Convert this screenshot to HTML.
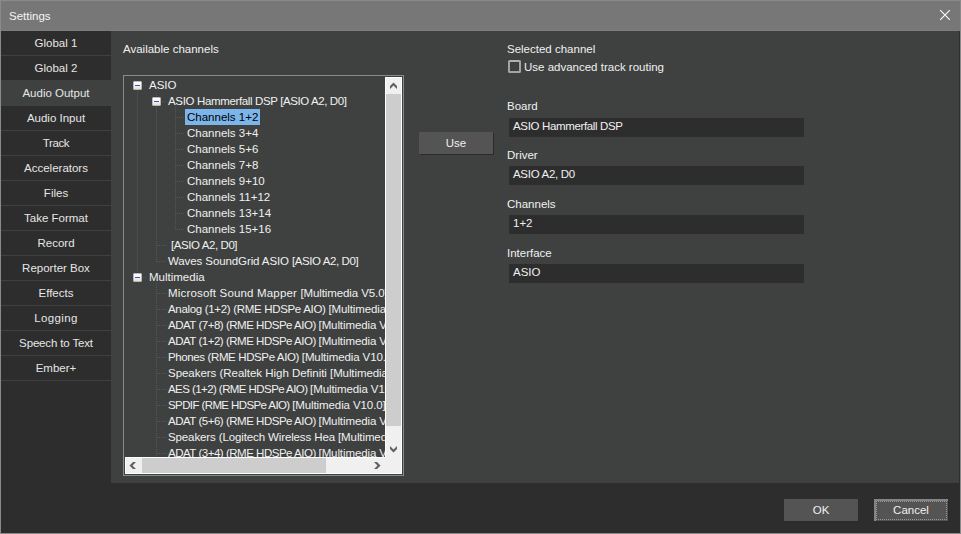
<!DOCTYPE html>
<html><head><meta charset="utf-8">
<style>
*{box-sizing:border-box}
html,body{margin:0;padding:0;width:961px;height:534px;overflow:hidden;background:#8a8a8a}
body{font-family:"Liberation Sans",sans-serif;font-size:11.5px;letter-spacing:0px;color:#f0f0f0;position:relative}
.a{position:absolute}
.t{position:absolute;line-height:14px;white-space:nowrap}
#title{left:1px;top:1px;width:959px;height:29px;background:#777777}
#tsep{left:1px;top:30px;width:959px;height:1px;background:#7c7c7c}
#body{left:1px;top:31px;width:959px;height:502px;background:#2d2d2d}
#panel{left:111px;top:31px;width:848px;height:452px;background:#3f4140}
.side{position:absolute;left:1px;width:110px;height:24px;background:#2d2d2d;color:#e6e6e6;text-align:center;line-height:14px;padding-top:5px}
.side.sel{background:#3f4140}
.sep{position:absolute;left:1px;width:110px;height:1px;background:#3f4140}
.box{position:absolute;left:509px;width:295px;height:19px;background:#2d2d2d}
.btn{position:absolute;width:74px;height:22px;background:#545454;text-align:center;line-height:14px;padding-top:4px;box-shadow:1px 1px 0 #2b2b2b}
.tv{position:absolute;line-height:14px;white-space:nowrap}
.dv{position:absolute;width:1px;background-image:linear-gradient(to bottom,#555756 50%,transparent 50%);background-size:1px 2px}
.dh{position:absolute;height:1px;background-image:linear-gradient(to right,#555756 50%,transparent 50%);background-size:2px 1px}
.pm{position:absolute;width:9px;height:9px;border:1px solid #b8b8b8;background:linear-gradient(#ffffff,#f4f4f4 50%,#dedede);border-radius:1px}
.pm:after{content:"";position:absolute;left:1px;top:3px;width:5px;height:1px;background:#3a56a8}
</style></head><body>
<div class="a" id="title"></div>
<div class="a" id="tsep"></div>
<div class="t" style="left:9px;top:9px;color:#f4f4f4">Settings</div>
<svg class="a" style="left:938px;top:8px" width="14" height="14" viewBox="0 0 14 14"><path d="M2.2 2.2L11.8 11.8M11.8 2.2L2.2 11.8" stroke="#f8f8f8" stroke-width="1.2"/></svg>
<div class="a" id="body"></div>
<div class="a" id="panel"></div>

<!-- sidebar -->
<div class="side" style="top:31px">Global 1</div><div class="sep" style="top:55px"></div>
<div class="side" style="top:56px">Global 2</div><div class="sep" style="top:80px"></div>
<div class="side sel" style="top:81px">Audio Output</div><div class="sep" style="top:105px"></div>
<div class="side" style="top:106px">Audio Input</div><div class="sep" style="top:130px"></div>
<div class="side" style="top:131px;letter-spacing:-0.4px">Track</div><div class="sep" style="top:155px"></div>
<div class="side" style="top:156px">Accelerators</div><div class="sep" style="top:180px"></div>
<div class="side" style="top:181px">Files</div><div class="sep" style="top:205px"></div>
<div class="side" style="top:206px">Take Format</div><div class="sep" style="top:230px"></div>
<div class="side" style="top:231px">Record</div><div class="sep" style="top:255px"></div>
<div class="side" style="top:256px">Reporter Box</div><div class="sep" style="top:280px"></div>
<div class="side" style="top:281px">Effects</div><div class="sep" style="top:305px"></div>
<div class="side" style="top:306px;letter-spacing:0.4px">Logging</div><div class="sep" style="top:330px"></div>
<div class="side" style="top:331px;letter-spacing:-0.15px">Speech to Text</div><div class="sep" style="top:355px"></div>
<div class="side" style="top:356px">Ember+</div><div class="sep" style="top:380px"></div>

<!-- left group -->
<div class="t" style="left:123px;top:42px">Available channels</div>

<!-- tree box -->
<div class="a" style="left:123px;top:75px;width:281px;height:401px;border:1px solid #858b93"></div>
<div class="a" id="tree" style="left:125px;top:77px;width:260px;height:380px;overflow:hidden;background:#3f4140;z-index:2">
<div class="dv" style="left:12px;top:14px;height:182px"></div>
<div class="dv" style="left:31px;top:16px;height:169px"></div>
<div class="dv" style="left:50px;top:30px;height:123px"></div>
<div class="dv" style="left:31px;top:206px;height:175px"></div>
<div class="dh" style="left:18px;top:8px;width:4px"></div>
<div class="dh" style="left:37px;top:24px;width:4px"></div>
<div class="dh" style="left:52px;top:40px;width:8px"></div>
<div class="dh" style="left:52px;top:56px;width:8px"></div>
<div class="dh" style="left:52px;top:72px;width:8px"></div>
<div class="dh" style="left:52px;top:88px;width:8px"></div>
<div class="dh" style="left:52px;top:104px;width:8px"></div>
<div class="dh" style="left:52px;top:120px;width:8px"></div>
<div class="dh" style="left:52px;top:136px;width:8px"></div>
<div class="dh" style="left:52px;top:152px;width:8px"></div>
<div class="dh" style="left:32px;top:168px;width:9px"></div>
<div class="dh" style="left:32px;top:184px;width:9px"></div>
<div class="dh" style="left:18px;top:200px;width:4px"></div>
<div class="dh" style="left:32px;top:216px;width:9px"></div>
<div class="dh" style="left:32px;top:232px;width:9px"></div>
<div class="dh" style="left:32px;top:248px;width:9px"></div>
<div class="dh" style="left:32px;top:264px;width:9px"></div>
<div class="dh" style="left:32px;top:280px;width:9px"></div>
<div class="dh" style="left:32px;top:296px;width:9px"></div>
<div class="dh" style="left:32px;top:312px;width:9px"></div>
<div class="dh" style="left:32px;top:328px;width:9px"></div>
<div class="dh" style="left:32px;top:344px;width:9px"></div>
<div class="dh" style="left:32px;top:360px;width:9px"></div>
<div class="dh" style="left:32px;top:376px;width:9px"></div>
<div class="a" style="left:60px;top:32px;width:75px;height:16px;background:#7cb5ea"></div>
<div class="tv" style="left:24px;top:1px">ASIO</div>
<div class="tv" style="left:43px;top:17px;letter-spacing:-0.35px">ASIO Hammerfall DSP <span style="letter-spacing:-0.42px">[ASIO A2, D0]</span></div>
<div class="tv" style="left:62px;top:33px;color:#000">Channels 1+2</div>
<div class="tv" style="left:62px;top:49px">Channels 3+4</div>
<div class="tv" style="left:62px;top:65px">Channels 5+6</div>
<div class="tv" style="left:62px;top:81px">Channels 7+8</div>
<div class="tv" style="left:62px;top:97px">Channels 9+10</div>
<div class="tv" style="left:62px;top:113px">Channels 11+12</div>
<div class="tv" style="left:62px;top:129px">Channels 13+14</div>
<div class="tv" style="left:62px;top:145px">Channels 15+16</div>
<div class="tv" style="left:46px;top:161px;letter-spacing:-0.42px">[ASIO A2, D0]</div>
<div class="tv" style="left:43px;top:177px;letter-spacing:-0.10px">Waves SoundGrid ASIO <span style="letter-spacing:-0.42px">[ASIO A2, D0]</span></div>
<div class="tv" style="left:24px;top:193px">Multimedia</div>
<div class="tv" style="left:43px;top:209px;letter-spacing:0.17px">Microsoft Sound Mapper <span style="letter-spacing:-0.1px">[Multimedia V5.0]</span></div>
<div class="tv" style="left:43px;top:225px;letter-spacing:-0.32px">Analog (1+2) (RME HDSPe AIO) <span style="letter-spacing:-0.1px">[Multimedia V10.0]</span></div>
<div class="tv" style="left:43px;top:241px;letter-spacing:-0.48px">ADAT (7+8) (RME HDSPe AIO) <span style="letter-spacing:-0.1px">[Multimedia V10.0]</span></div>
<div class="tv" style="left:43px;top:257px;letter-spacing:-0.48px">ADAT (1+2) (RME HDSPe AIO) <span style="letter-spacing:-0.1px">[Multimedia V10.0]</span></div>
<div class="tv" style="left:43px;top:273px;letter-spacing:-0.38px">Phones (RME HDSPe AIO) <span style="letter-spacing:-0.1px">[Multimedia V10.0]</span></div>
<div class="tv" style="left:43px;top:289px;letter-spacing:-0.03px">Speakers (Realtek High Definiti <span style="letter-spacing:-0.1px">[Multimedia V10.0]</span></div>
<div class="tv" style="left:43px;top:305px;letter-spacing:-0.57px">AES (1+2) (RME HDSPe AIO) <span style="letter-spacing:-0.1px">[Multimedia V10.0]</span></div>
<div class="tv" style="left:43px;top:321px;letter-spacing:-0.60px">SPDIF (RME HDSPe AIO) <span style="letter-spacing:-0.1px">[Multimedia V10.0]</span></div>
<div class="tv" style="left:43px;top:337px;letter-spacing:-0.48px">ADAT (5+6) (RME HDSPe AIO) <span style="letter-spacing:-0.1px">[Multimedia V10.0]</span></div>
<div class="tv" style="left:43px;top:353px;letter-spacing:-0.12px">Speakers (Logitech Wireless Hea <span style="letter-spacing:-0.1px">[Multimedia V10.0]</span></div>
<div class="tv" style="left:43px;top:369px;letter-spacing:-0.48px">ADAT (3+4) (RME HDSPe AIO) <span style="letter-spacing:-0.1px">[Multimedia V10.0]</span></div>
<div class="pm" style="left:8px;top:4px"></div>
<div class="pm" style="left:27px;top:20px"></div>
<div class="pm" style="left:8px;top:196px"></div>
</div>
<!-- v scrollbar -->
<div class="a" style="left:125px;top:77px;width:277px;height:397px;background:#f0f0f0;border:1px solid #fff"></div>
<div class="a" style="left:125px;top:77px;width:261px;height:381px;background:#fff"></div>
<div class="a" style="left:386px;top:94px;width:15px;height:332px;background:#cdcdcd"></div>
<div class="a" style="left:142px;top:458px;width:184px;height:15px;background:#cdcdcd"></div>
<svg class="a" style="left:0;top:0" width="961" height="534" viewBox="0 0 961 534">
<polygon points="390,89 390,86 393.5,82.5 397,86 397,89 393.5,85.5" fill="#606060"/>
<polygon points="390,446 390,449 393.5,452.5 397,449 397,446 393.5,449.5" fill="#606060"/>
<polygon points="136,462 133,462 129.5,465.5 133,469 136,469 132.5,465.5" fill="#606060"/>
<polygon points="374,462 377,462 380.5,465.5 377,469 374,469 377.5,465.5" fill="#606060"/>
</svg>
<!-- Use button -->
<div class="btn" style="left:419px;top:132px">Use</div>

<!-- right group -->
<div class="t" style="left:507px;top:42px">Selected channel</div>
<div class="a" style="left:508px;top:60px;width:13px;height:13px;border:2px solid #a4a4a4;border-top-color:#b0b0b0;border-radius:2px;box-shadow:inset 0 0 0 1px #3a3c3b"></div>
<div class="t" style="left:524px;top:60px">Use advanced track routing</div>

<div class="t" style="left:507px;top:99px">Board</div>
<div class="box" style="top:118px"></div>
<div class="t" style="left:513px;top:119px;letter-spacing:-0.35px">ASIO Hammerfall DSP</div>

<div class="t" style="left:507px;top:148px">Driver</div>
<div class="box" style="top:166px"></div>
<div class="t" style="left:513px;top:167px;letter-spacing:-0.3px">ASIO A2, D0</div>

<div class="t" style="left:507px;top:197px">Channels</div>
<div class="box" style="top:215px"></div>
<div class="t" style="left:513px;top:216px">1+2</div>

<div class="t" style="left:507px;top:246px">Interface</div>
<div class="box" style="top:264px"></div>
<div class="t" style="left:513px;top:265px">ASIO</div>

<!-- bottom buttons -->
<div class="btn" style="left:784px;top:499px">OK</div>
<div class="btn" style="left:874px;top:499px;border-top:2px solid #858585;border-left:2px solid #858585;padding-top:2px;padding-right:2px">Cancel</div>
<div class="dh" style="left:876px;top:501px;width:71px;background-image:linear-gradient(to right,#989898 50%,transparent 50%)"></div>
<div class="dh" style="left:876px;top:519px;width:71px;background-image:linear-gradient(to right,#989898 50%,transparent 50%)"></div>
<div class="dv" style="left:876px;top:501px;height:19px;background-image:linear-gradient(to bottom,#989898 50%,transparent 50%)"></div>
<div class="dv" style="left:946px;top:501px;height:19px;background-image:linear-gradient(to bottom,#989898 50%,transparent 50%)"></div>

</body></html>
